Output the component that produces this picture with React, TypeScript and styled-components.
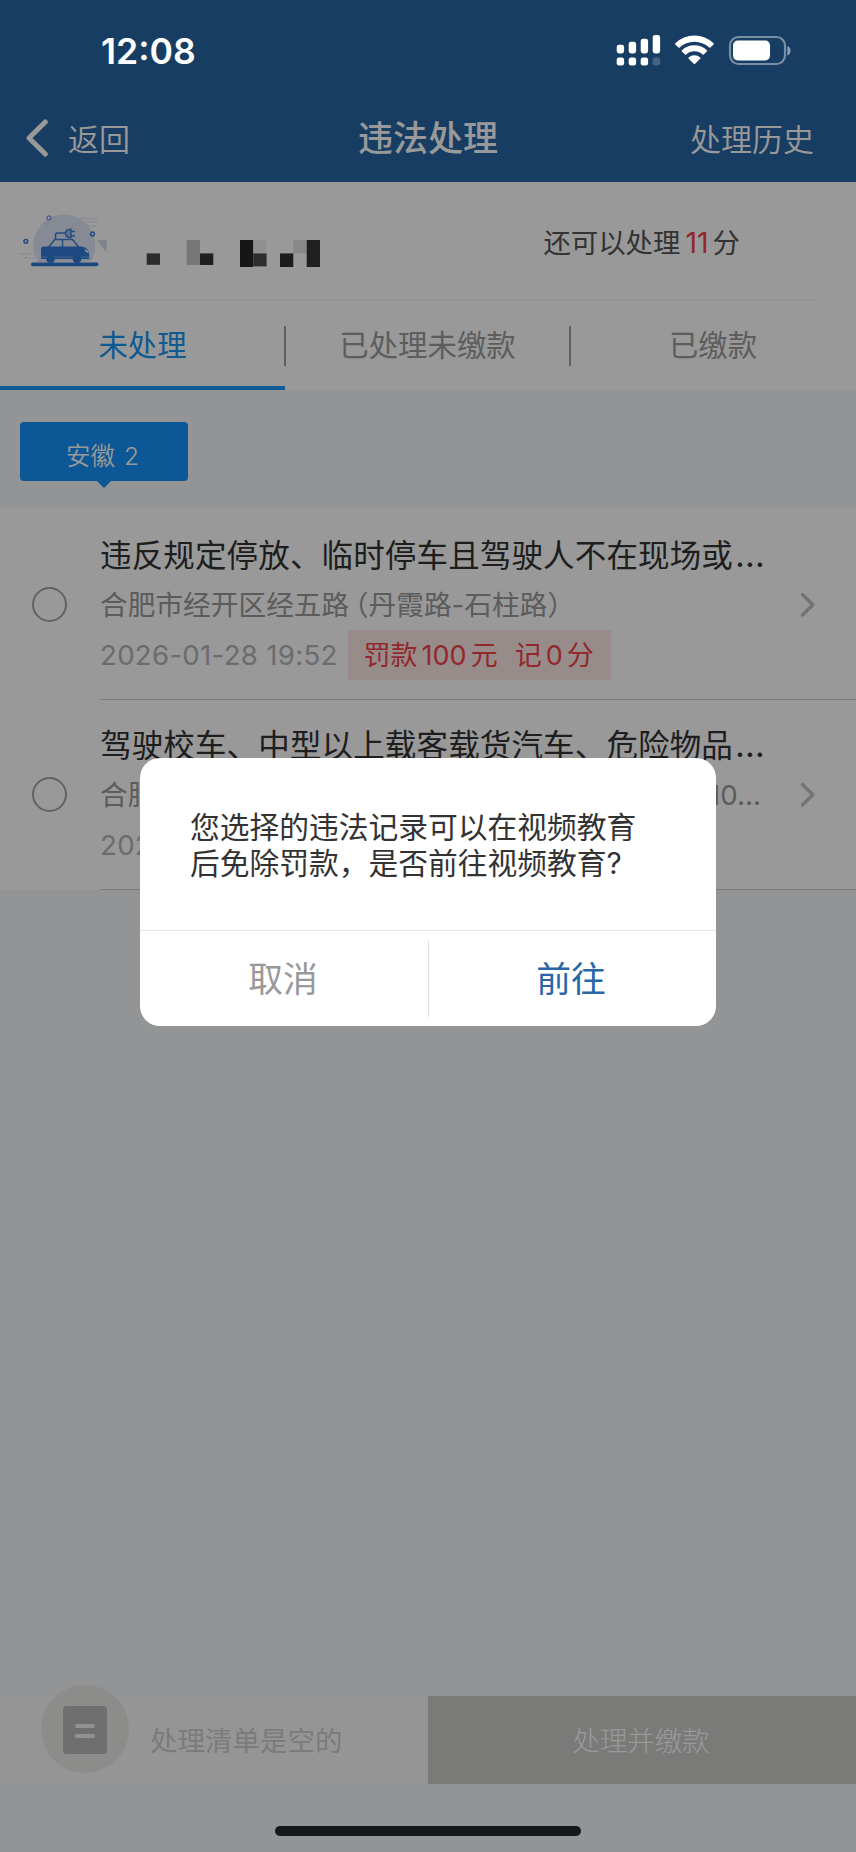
import React from "react";
import styled, { createGlobalStyle } from "styled-components";

const GlobalStyle = createGlobalStyle`
  *, *::before, *::after { box-sizing: border-box; }
  body {
    margin: 0;
    background: #f3f7fa;
    font-family: Inter, "Noto Sans CJK SC", sans-serif;
  }
  button { font-family: inherit; border: 0; background: none; padding: 0; margin: 0; }
`;

const Screen = styled.div`
  position: relative;
  width: 856px;
  height: 1852px;
  display: flex;
  flex-direction: column;
  background: #f3f7fa;
  overflow: hidden;
  white-space: nowrap;
`;

const StatusBar = styled.div`
  position: absolute;
  z-index: 3;
  top: 0;
  left: 0;
  right: 0;
  height: 100px;
  padding: 0 64px 0 101px;
  display: flex;
  align-items: center;
  justify-content: space-between;
  color: #fff;
`;

const Clock = styled.span`
  font-size: 35.6px;
  line-height: 44px;
  font-weight: 600;
  padding-top: 4px;
`;

const NavBar = styled.header`
  height: 182px;
  flex: none;
  padding: 94px 42px 0;
  display: grid;
  grid-template-columns: 1fr auto 1fr;
  align-items: center;
  background: #2866a5;
  color: #fff;
`;

const NavAction = styled.button<{ $end?: boolean }>`
  display: flex;
  align-items: center;
  gap: 20px;
  justify-self: ${(p) => (p.$end ? "end" : "start")};
  margin-left: ${(p) => (p.$end ? "0" : "-16px")};
  padding-top: ${(p) => (p.$end ? "3px" : "0")};
  color: #fff;
  font-size: 31px;
  line-height: 44px;
  font-weight: 350;
`;

const BackLabel = styled.span`
  padding-top: 3px;
`;

const NavTitle = styled.h1`
  margin: 0;
  font-size: 35px;
  line-height: 48px;
  font-weight: 500;
`;

const Account = styled.section`
  height: 119px;
  flex: none;
  position: relative;
  padding: 0 116px 0 18px;
  display: flex;
  align-items: flex-start;
  background: #fff;

  &::after {
    content: "";
    position: absolute;
    left: 40px;
    right: 39px;
    bottom: 0;
    height: 1px;
    background: #f2f2f2;
  }
`;

const CarArt = styled.svg`
  margin-top: 26px;
  flex: none;
`;

const HiddenName = styled.svg`
  margin: 45px 0 0 28px;
  flex: none;
`;

const Quota = styled.div`
  margin: 41px 0 0 auto;
  display: flex;
  align-items: center;
  font-size: 27.4px;
  line-height: 40px;
  color: #555;
`;

const QuotaValue = styled.b`
  font-weight: 400;
  color: #f4444a;
  margin: 0 4px 0 5px;
  font-size: 28.5px;
`;

const Tabs = styled.nav`
  height: 89px;
  flex: none;
  display: grid;
  grid-template-columns: 285px 285px 286px;
  background: #fff;
`;

const Tab = styled.button<{ $active?: boolean }>`
  position: relative;
  display: flex;
  align-items: center;
  justify-content: center;
  font-size: 29.4px;
  line-height: 40px;
  padding-top: 5px;
  color: ${(p) => (p.$active ? "#1795f2" : "#9b9b9b")};
  border-bottom: 4px solid ${(p) => (p.$active ? "#179af8" : "transparent")};

  &:not(:first-child)::before {
    content: "";
    position: absolute;
    left: -1px;
    top: 25px;
    width: 2px;
    height: 40px;
    background: #a0a0a0;
  }
`;

const Regions = styled.div`
  height: 118px;
  flex: none;
  padding: 32px 20px 0;
  display: flex;
  align-items: flex-start;
`;

const Region = styled.button`
  position: relative;
  width: 168px;
  height: 59px;
  border-radius: 4px;
  padding: 9px 3px 0 0;
  background: #1592f8;
  color: #fff;
  font-size: 24.5px;
  line-height: 36px;
  font-weight: 350;
  word-spacing: 2px;

  &::after {
    content: "";
    position: absolute;
    left: 76px;
    top: 58px;
    border: 8px solid transparent;
    border-top-color: #1592f8;
    border-bottom: 0;
  }
`;

const List = styled.ul`
  margin: 0;
  padding: 2px 0 0;
  list-style: none;
  background: #fff;
`;

const Row = styled.li`
  height: 190px;
  display: flex;
  align-items: stretch;
`;

const RadioCell = styled.div`
  width: 100px;
  flex: none;
  padding: 77px 0 0 32px;
`;

const Radio = styled.div`
  width: 35px;
  height: 35px;
  border: 2px solid #a4a4a4;
  border-radius: 50%;
`;

const RowBody = styled.div`
  flex: 1;
  display: flex;
  justify-content: space-between;
  padding-right: 40px;
  border-bottom: 1px solid #cfd1d1;
`;

const Details = styled.div`
  display: flex;
  flex-direction: column;
  padding-top: 24px;
  width: 665px;
`;

const Offence = styled.div`
  font-size: 31.5px;
  line-height: 44px;
  letter-spacing: 0.15px;
  color: #333;
`;

const Ellipsis = styled.span`
  margin-left: 2px;
  font-size: 34.5px;
  line-height: 1;
`;

const Place = styled.div`
  display: flex;
  justify-content: space-between;
  height: 52px;
  padding: 2px 4px 0 0;
  font-size: 27.7px;
  line-height: 50px;
  color: #999;
`;

const Paren = styled.span<{ $open?: boolean }>`
  margin-left: ${(p) => (p.$open ? "5.5px" : "0")};
  font-feature-settings: "halt";
`;

const Meta = styled.div`
  display: flex;
  align-items: center;
  gap: 10px;
  height: 50px;
`;

const Stamp = styled.span`
  font-size: 27.6px;
  line-height: 40px;
  letter-spacing: 0.3px;
  color: #b1b4b6;
`;

const Penalty = styled.span`
  display: flex;
  align-items: center;
  gap: 17px;
  width: 263px;
  height: 50px;
  padding: 2px 0 0 16px;
  background: #fee9e8;
  color: #f4444a;
  font-size: 27px;
  line-height: 40px;
`;

const Amount = styled.span<{ $gap: number }>`
  margin: 0 ${(p) => p.$gap}px;
`;

const Chevron = styled.svg`
  margin-top: 82px;
  flex: none;
`;

const Footer = styled.footer`
  margin-top: auto;
  height: 156px;
  flex: none;
`;

const ActionBar = styled.div`
  height: 88px;
  display: grid;
  grid-template-columns: 1fr 1fr;
`;

const Basket = styled.div`
  display: flex;
  align-items: center;
  padding-left: 41px;
  gap: 21px;
  background: #faf9f8;
  color: #cdcdcd;
  font-size: 27.5px;
  line-height: 40px;
`;

const BasketLabel = styled.span`
  padding-top: 2px;
`;

const BasketIcon = styled.svg`
  margin-top: -23px;
  flex: none;
`;

const Pay = styled.button`
  padding: 2px 2px 0 0;
  background: #cbcbca;
  color: #fff;
  font-size: 27.4px;
  line-height: 40px;
  font-weight: 300;
`;

const Mask = styled.div`
  position: absolute;
  z-index: 2;
  inset: 0;
  padding-bottom: 68px;
  display: flex;
  align-items: center;
  justify-content: center;
  background: rgba(0, 0, 0, 0.4);
`;

const Dialog = styled.div`
  width: 576px;
  height: 268px;
  border-radius: 20px;
  background: #fff;
  display: flex;
  flex-direction: column;
`;

const Message = styled.p`
  margin: 0;
  flex: none;
  height: 173px;
  padding: 51px 0 0 50px;
  border-bottom: 1px solid #e4e4e4;
  font-size: 29.75px;
  line-height: 36px;
  color: #333;
`;

const DialogActions = styled.div`
  flex: 1;
  display: grid;
  grid-template-columns: 1fr 1fr;
`;

const DialogButton = styled.button<{ $primary?: boolean }>`
  position: relative;
  padding: 1px 2px 0 0;
  font-size: 34.8px;
  line-height: 48px;
  font-weight: 400;
  color: ${(p) => (p.$primary ? "#2866a5" : "#999")};

  &:not(:first-child)::before {
    content: "";
    position: absolute;
    left: 0;
    top: 10px;
    bottom: 9px;
    width: 1px;
    background: #e0e0e0;
  }
`;

const HomeIndicator = styled.div`
  position: absolute;
  z-index: 3;
  left: 275px;
  bottom: 16px;
  width: 306px;
  height: 10px;
  border-radius: 5px;
  background: #161718;
`;

const signalTops = [44.7, 41.7, 38.7, 35];

function StatusIcons() {
  return (
    <svg width="176" height="40" viewBox="616 30 176 40" fill="#fff">
      {signalTops.map((top, i) => (
        <g key={top}>
          <rect x={616.7 + i * 12} y={top} width="7.4" height={53.4 - top} rx="2.4" />
          <rect x={616.7 + i * 12} y="57.4" width="7.4" height="8.2" rx="2.4" opacity={i === 3 ? 0.2 : 1} />
        </g>
      ))}
      <path d="M675.3 43.3a27.6 27.6 0 0 1 38.2 0 .9.9 0 0 1 0 1.2l-3.1 3.1a.9.9 0 0 1-1.2 0 21.7 21.7 0 0 0-29.6 0 .9.9 0 0 1-1.2 0l-3.1-3.1a.9.9 0 0 1 0-1.2z" />
      <path d="M681.9 50.2a18 18 0 0 1 25 0 .9.9 0 0 1 0 1.2l-3.1 3.1a.9.9 0 0 1-1.2 0 12 12 0 0 0-16.4 0 .9.9 0 0 1-1.2 0l-3.1-3.1a.9.9 0 0 1 0-1.2z" />
      <path d="M688.6 57.4a8.7 8.7 0 0 1 11.6 0 .9.9 0 0 1 0 1.3l-5.1 5.1a.9.9 0 0 1-1.3 0l-5.1-5.1a.9.9 0 0 1-.1-1.3z" />
      <rect x="730" y="37" width="55" height="27" rx="8.5" fill="none" stroke="#fff" strokeOpacity=".42" strokeWidth="2.2" />
      <rect x="733" y="40.6" width="37" height="19.8" rx="4.6" />
      <path d="M787.3 46v9.4a5 5 0 0 0 0-9.4z" opacity=".5" />
    </svg>
  );
}

function Car() {
  return (
    <CarArt width="92" height="62" viewBox="18 208 92 62" fill="none">
      <path d="M38 262a31 31 0 1 1 53-1z" fill="#dfe7f8" />
      <path d="M80 218.500h18M84 222h13M88 226h8M20 254h18M24 258h14" stroke="#e9eefa" strokeWidth="1.6" />
      <path d="M97.500 240h9v13z" fill="#d3dce4" />
      <g stroke="#3b7fd8" strokeWidth="1.5">
        <circle cx="49" cy="218" r="1.900" stroke="#8fa4ea" />
        <circle cx="92.500" cy="234" r="1.900" />
        <circle cx="25.800" cy="241.300" r="1.900" />
        <path d="M55.500 239v-4q0-2 2-2H66M71.500 231.500H75M71.500 236H75" />
        <path d="M71 229.500v8h-2q-3.500-.5-3.500-4t3.500-4z" fill="#9cbcf0" />
        <path d="M48.500 247.500l6.300-8h17.700l6.500 8M62.500 240v7" />
      </g>
      <path d="M41 249q0-2.500 2.500-2.500H82q6.500 1 7.200 8v4.500H41z" fill="#317bd8" />
      <path d="M41.500 257.200H89" stroke="#6ba1ee" strokeWidth="1.300" />
      <path d="M84.500 249.500q3.500 0 3.800 3.500-3-.5-3.800-3.500z" fill="#fff" />
      <circle cx="50.500" cy="259" r="4.300" fill="#317bd8" />
      <circle cx="77" cy="259" r="4.300" fill="#317bd8" />
      <rect x="31" y="262.500" width="67.500" height="3.700" rx="1.850" fill="#317bd8" />
    </CarArt>
  );
}

type Block = [number, number, number, number, string];
const blocks: Block[] = [
  [8.700, 26.400, 13.300, 11.400, "#4a4a4a"],
  [48.700, 13, 13.300, 25, "#c6c6c6"],
  [62, 26.400, 13.300, 11.600, "#353535"],
  [102, 13, 13.300, 27, "#262626"],
  [115.300, 13, 13.300, 13.400, "#f0f0f0"],
  [115.300, 26.400, 13.300, 13, "#4c4c4c"],
  [142, 26.400, 13.300, 13.600, "#303030"],
  [155.300, 13, 13.300, 13.400, "#e3e3e3"],
  [168.700, 13, 13.300, 27, "#363636"],
];

function Arrow() {
  return (
    <Chevron width="16" height="26" viewBox="0 0 16 26" fill="none">
      <path d="M2.500 2.500 12.800 12.700 2.500 23" stroke="#c1c1c1" strokeWidth="3.500" strokeLinecap="round" strokeLinejoin="round" />
    </Chevron>
  );
}

export default function App() {
  return (
    <Screen>
      <GlobalStyle />
      <StatusBar>
        <Clock>12:08</Clock>
        <StatusIcons />
      </StatusBar>

      <NavBar>
        <NavAction>
          <svg width="22" height="38" viewBox="0 0 22 38" fill="none">
            <path d="M19.300 3 3 19l16.300 16" stroke="#fff" strokeWidth="5" strokeLinecap="round" strokeLinejoin="round" />
          </svg>
          <BackLabel>返回</BackLabel>
        </NavAction>
        <NavTitle>违法处理</NavTitle>
        <NavAction $end>处理历史</NavAction>
      </NavBar>

      <Account>
        <Car />
        <HiddenName width="190" height="42" viewBox="0 0 190 42">
          {blocks.map(([x, y, w, h, fill]) => (
            <rect key={`${x}-${y}`} x={x} y={y} width={w} height={h} fill={fill} />
          ))}
        </HiddenName>
        <Quota>
          还可以处理<QuotaValue>11</QuotaValue>分
        </Quota>
      </Account>

      <Tabs>
        <Tab $active>未处理</Tab>
        <Tab>已处理未缴款</Tab>
        <Tab>已缴款</Tab>
      </Tabs>

      <Regions>
        <Region>安徽 2</Region>
      </Regions>

      <List>
        <Row>
          <RadioCell>
            <Radio />
          </RadioCell>
          <RowBody>
            <Details>
              <Offence>
                违反规定停放、临时停车且驾驶人不在现场或<Ellipsis>…</Ellipsis>
              </Offence>
              <Place>
                <span>
                  合肥市经开区经五路<Paren $open>（</Paren>丹霞路-石柱路<Paren>）</Paren>
                </span>
              </Place>
              <Meta>
                <Stamp>2026-01-28 19:52</Stamp>
                <Penalty>
                  <span>
                    罚款<Amount $gap={4}>100</Amount>元
                  </span>
                  <span>
                    记<Amount $gap={4}>0</Amount>分
                  </span>
                </Penalty>
              </Meta>
            </Details>
            <Arrow />
          </RowBody>
        </Row>
        <Row>
          <RadioCell>
            <Radio />
          </RadioCell>
          <RowBody>
            <Details>
              <Offence>
                驾驶校车、中型以上载客载货汽车、危险物品<Ellipsis>…</Ellipsis>
              </Offence>
              <Place>
                <span>合肥</span>
                <span>10…</span>
              </Place>
              <Meta>
                <Stamp>202</Stamp>
              </Meta>
            </Details>
            <Arrow />
          </RowBody>
        </Row>
      </List>

      <Footer>
        <ActionBar>
          <Basket>
            <BasketIcon width="88" height="88" viewBox="0 0 88 88">
              <circle cx="44" cy="44" r="44" fill="#e9e9e8" />
              <rect x="22" y="21" width="44" height="48" rx="3.500" fill="#bababa" />
              <path d="M36 41h16M36 51h16" stroke="#f3f3f3" strokeWidth="4" strokeLinecap="round" />
            </BasketIcon>
            <BasketLabel>处理清单是空的</BasketLabel>
          </Basket>
          <Pay>处理并缴款</Pay>
        </ActionBar>
      </Footer>

      <Mask>
        <Dialog>
          <Message>
            您选择的违法记录可以在视频教育
            <br />
            后免除罚款，是否前往视频教育?
          </Message>
          <DialogActions>
            <DialogButton>取消</DialogButton>
            <DialogButton $primary>前往</DialogButton>
          </DialogActions>
        </Dialog>
      </Mask>
      <HomeIndicator />
    </Screen>
  );
}
